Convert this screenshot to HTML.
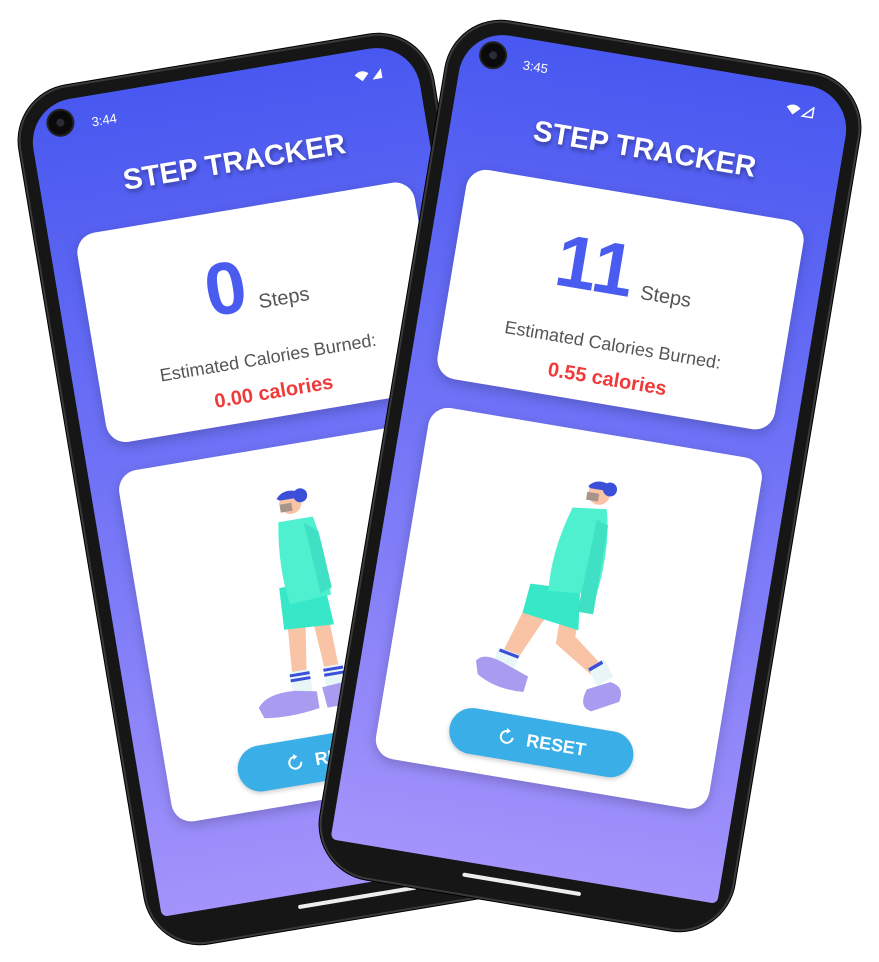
<!DOCTYPE html>
<html><head><meta charset="utf-8"><style>
html,body{margin:0;padding:0;background:#fff;width:879px;height:962px;overflow:hidden;position:relative;font-family:"Liberation Sans",sans-serif}
.phone{position:absolute;width:420px;height:870px;left:-210px;top:-435px;border-radius:56px;background:#161616;box-shadow:0 0 0 2px #3a3a3a inset,0 0 0 1px #000}
.wrap{position:absolute;width:0;height:0}
.screen{position:absolute;left:14px;top:14px;width:392px;height:822px;border-radius:44px 44px 6px 6px;background:linear-gradient(#4858f0,#6f72f6 45%,#a393fb);overflow:hidden}
.cam{position:absolute;left:19px;top:10px;width:24px;height:24px;border-radius:50%;background:#0a0a0a;box-shadow:0 0 0 2px #222}
.cam:after{content:"";position:absolute;left:8px;top:8px;width:8px;height:8px;border-radius:50%;background:#2b2b3a}
.time{position:absolute;left:62px;top:19px;color:#fff;font-size:13px}
.stat{position:absolute;right:34px;top:20px}
.title{position:absolute;left:0;width:392px;top:74px;text-align:center;color:#fff;font-weight:bold;font-size:29px;text-shadow:1px 3px 4px rgba(0,0,0,.35)}
.card{position:absolute;background:#fff;border-radius:20px;box-shadow:0 4px 12px rgba(0,0,0,.2)}
.c1{left:26px;top:136px;width:342px;height:212px}
.c2{left:28px;top:377px;width:338px;height:356px}
.num{position:absolute;top:34px;left:0;width:100%;text-align:center;color:#4a5cf0;font-weight:bold;font-size:74px}
.num span{font-size:20px;color:#555;font-weight:normal;margin-left:10px}
.est{position:absolute;top:142px;width:100%;text-align:center;color:#555;font-size:18px}
.cal{position:absolute;top:176px;width:100%;text-align:center;color:#f03a3a;font-weight:bold;font-size:20px}
.btn{position:absolute;left:71px;top:292px;width:186px;height:46px;border-radius:23px;background:#3aaee6;color:#fff;font-weight:bold;font-size:18px;display:flex;align-items:center;justify-content:center;gap:10px;box-shadow:0 2px 5px rgba(0,0,0,.2)}
.fig{position:absolute;left:82px;top:30px}
.home{position:absolute;left:150px;top:847px;width:120px;height:4px;border-radius:2px;background:#eee}
</style></head><body>

<div class="wrap" style="left:289px;top:489px;transform:rotate(-9.5deg)">
<div class="phone">
 <div class="screen">
  <div class="cam"></div><div class="time">3:44</div>
  <svg class="stat" width="30" height="12" viewBox="0 0 30 12"><path d="M1 4 Q8 -2 15 4 L8 11Z" fill="#fff"/><path d="M28 1 L28 11 L18 11Z" fill="#fff"/></svg>
  <div class="title">STEP TRACKER</div>
  <div class="card c1"><div class="num">0<span>Steps</span></div><div class="est">Estimated Calories Burned:</div><div class="cal">0.00 calories</div></div>
  <div class="card c2">
   <svg class="fig" width="170" height="260" viewBox="0 0 170 260">
    <path d="M62 150 L58 205 L72 205 L80 150Z" fill="#f9c3a5"/>
    <path d="M88 150 L92 205 L106 205 L104 150Z" fill="#f9c3a5"/>
    <rect x="56" y="195" width="20" height="22" fill="#e8f6f8"/><rect x="56" y="197" width="20" height="3" fill="#3b4fd8"/><rect x="56" y="202" width="20" height="3" fill="#3b4fd8"/>
    <rect x="90" y="195" width="20" height="22" fill="#e8f6f8"/><rect x="90" y="197" width="20" height="3" fill="#3b4fd8"/><rect x="90" y="202" width="20" height="3" fill="#3b4fd8"/>
    <path d="M20 225 Q30 212 58 214 L80 218 L80 235 Q50 240 24 236Z" fill="#a99cf0"/>
    <path d="M86 215 L112 213 Q122 222 112 236 L88 236Z" fill="#a99cf0"/>
    <path d="M60 110 L105 110 L108 155 L58 152Z" fill="#36e8c8"/>
    <path d="M70 45 L105 45 Q112 80 110 125 L68 128 Q62 90 70 45Z" fill="#4ff0d0"/>
    <path d="M95 50 L108 60 L112 118 L100 122Z" fill="#3fe0c4"/>
    <circle cx="85" cy="28" r="11" fill="#f9c3a5"/><rect x="74" y="28" width="12" height="8" fill="#a8958a"/>
    <path d="M72 22 Q80 12 95 18 L92 24 L75 24Z" fill="#3b4fd8"/><circle cx="96" cy="22" r="7" fill="#3b4fd8"/>
   </svg>
   <div class="btn"><svg width="20" height="20" viewBox="0 0 20 20"><path d="M16 10 A6 6 0 1 1 10 4" stroke="#fff" stroke-width="2" fill="none"/><path d="M9 1 L13 4 L9 7Z" fill="#fff"/></svg>RESET</div>
  </div>
 </div>
 <div class="home"></div>
</div></div>

<div class="wrap" style="left:590px;top:476px;transform:rotate(9.5deg)">
<div class="phone">
 <div class="screen">
  <div class="cam"></div><div class="time">3:45</div>
  <svg class="stat" width="30" height="12" viewBox="0 0 30 12"><path d="M1 4 Q8 -2 15 4 L8 11Z" fill="#fff"/><path d="M28 1 L28 11 L18 11Z" fill="none" stroke="#fff" stroke-width="1.5"/></svg>
  <div class="title">STEP TRACKER</div>
  <div class="card c1"><div class="num">11<span>Steps</span></div><div class="est">Estimated Calories Burned:</div><div class="cal">0.55 calories</div></div>
  <div class="card c2">
   <svg class="fig" width="170" height="260" viewBox="0 0 170 260">
    <path d="M45 150 L28 205 L44 208 L68 155Z" fill="#f9c3a5"/>
    <path d="M80 155 L80 185 L120 210 L128 198 L98 175 L98 155Z" fill="#f9c3a5"/>
    <path d="M24 198 L46 202 L42 220 L22 216Z" fill="#e8f6f8"/><path d="M26 199 L46 203 L45 206 L25 202Z" fill="#3b4fd8"/>
    <path d="M116 204 L130 192 L142 208 L128 220Z" fill="#e8f6f8"/><path d="M116 204 L128 194 L130 197 L118 207Z" fill="#3b4fd8"/>
    <path d="M4 215 Q10 205 30 212 L58 222 L56 238 Q28 240 8 228Z" fill="#a99cf0"/>
    <path d="M118 225 L140 214 Q156 216 152 232 L126 246 Q112 244 118 225Z" fill="#a99cf0"/>
    <path d="M45 130 L95 128 L100 168 L42 160Z" fill="#36e8c8"/>
    <path d="M74 48 L108 44 Q118 80 112 130 L64 134 Q60 95 74 48Z" fill="#4ff0d0"/>
    <path d="M100 56 L112 60 L112 150 L96 150Z" fill="#3fe0c4"/>
    <circle cx="98" cy="30" r="11" fill="#f9c3a5"/><rect x="86" y="30" width="12" height="8" fill="#a8958a"/>
    <path d="M86 24 Q94 14 108 20 L104 26 L88 26Z" fill="#3b4fd8"/><circle cx="108" cy="24" r="7" fill="#3b4fd8"/>
   </svg>
   <div class="btn"><svg width="20" height="20" viewBox="0 0 20 20"><path d="M16 10 A6 6 0 1 1 10 4" stroke="#fff" stroke-width="2" fill="none"/><path d="M9 1 L13 4 L9 7Z" fill="#fff"/></svg>RESET</div>
  </div>
 </div>
 <div class="home"></div>
</div></div>

</body></html>
